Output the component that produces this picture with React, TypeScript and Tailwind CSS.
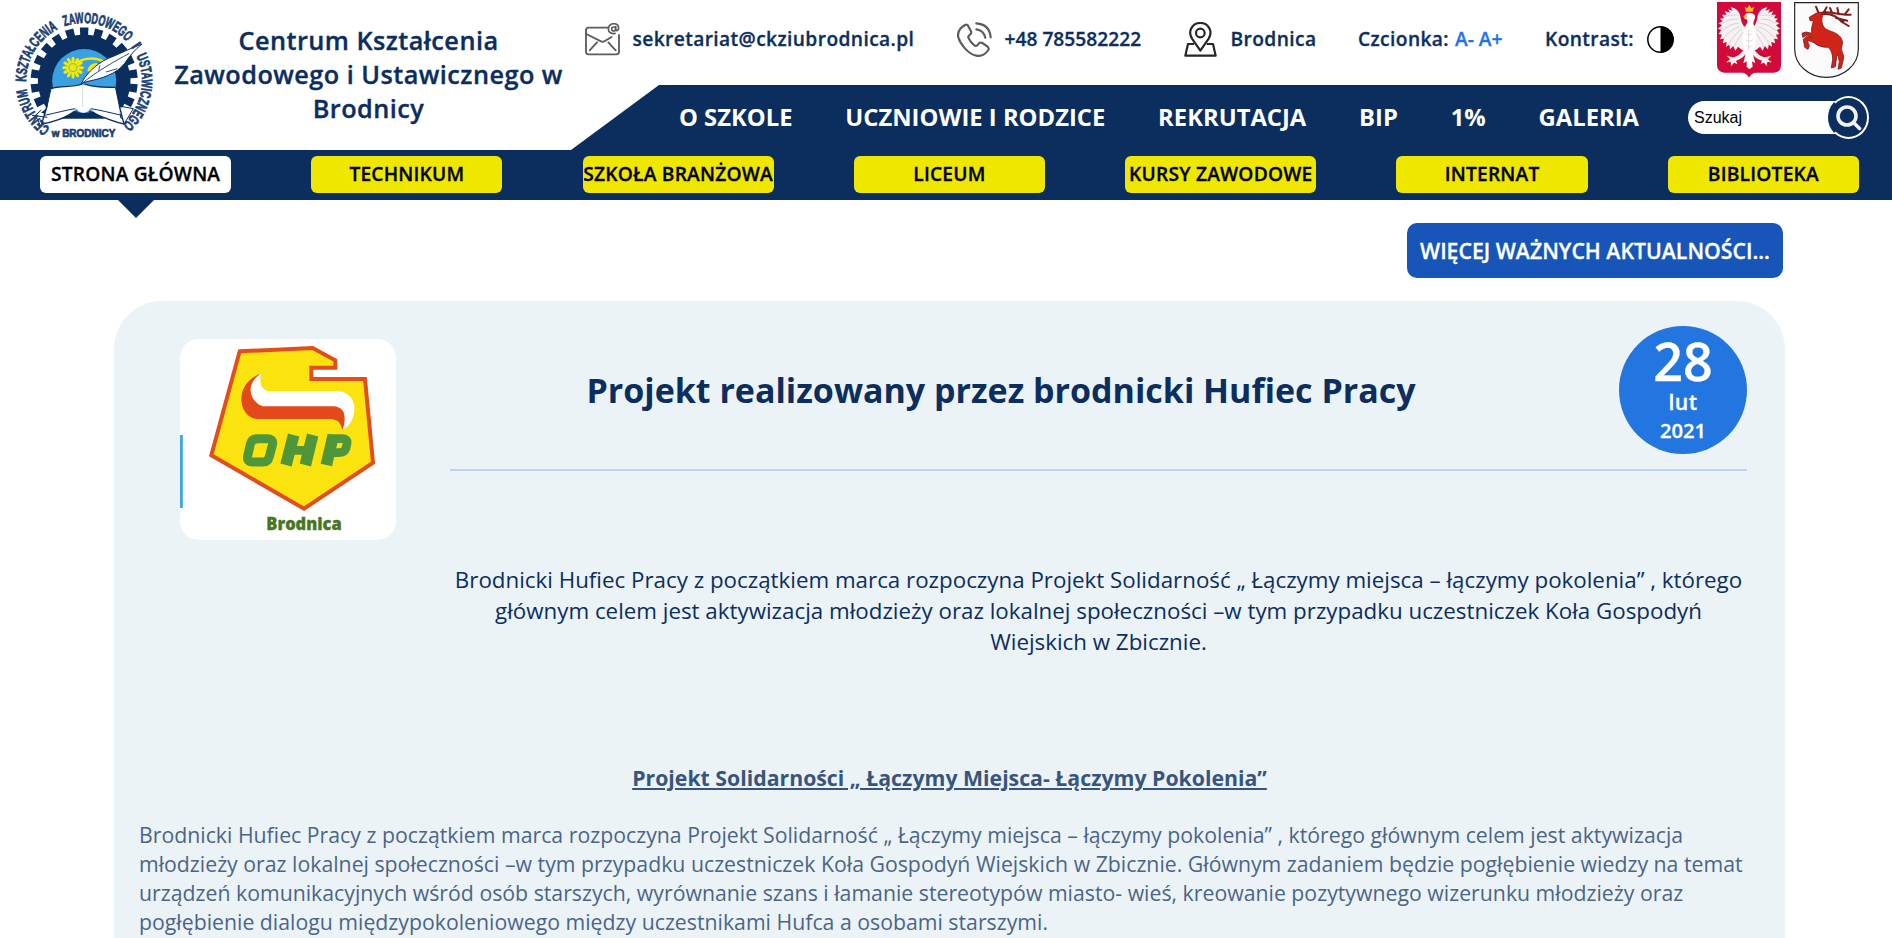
import type { ReactNode } from 'react';

const NAVY = '#0b2e5e';

function gearPoints(cx: number, cy: number, outer: number, root: number, teeth: number) {
  const pts: string[] = [];
  const step = (Math.PI * 2) / teeth;
  const at = (r: number, a: number) =>
    pts.push((cx + r * Math.sin(a)).toFixed(1) + ',' + (cy - r * Math.cos(a)).toFixed(1));
  for (let i = 0; i < teeth; i++) {
    const a = i * step;
    at(root, a - step * 0.3);
    at(outer, a - step * 0.28);
    at(outer, a + step * 0.28);
    at(root, a + step * 0.3);
  }
  return pts.join(' ');
}

const ringWords = [
  { text: 'CENTRUM', offset: 108, length: 142 },
  { text: 'KSZTAŁCENIA', offset: 271, length: 194 },
  { text: 'ZAWODOWEGO', offset: 487, length: 204 },
  { text: 'I', offset: 710, length: 10 },
  { text: 'USTAWICZNEGO', offset: 741, length: 226 },
];

function SchoolLogo() {
  return (
    <svg viewBox="42 33 420 381" className="h-[127px] w-[140px] overflow-visible">
      <defs>
        <path id="ring" d="M252,417 A174,174 0 0 1 252,69 A174,174 0 0 1 252,417" />
        <clipPath id="gearClip">
          <rect x="60" y="60" width="390" height="296" />
        </clipPath>
      </defs>
      <g clipPath="url(#gearClip)">
        <polygon points={gearPoints(252.5, 243, 161, 139, 22)} fill={NAVY} />
        <circle cx="252.5" cy="243" r="96" fill="#3ba0e2" />
      </g>
      <g fill="none" stroke="#f4ea00" strokeLinecap="round">
        {[0, 30, 60, 90, 120, 150].map((d) => (
          <path key={d} d="M191,203 H247" strokeWidth="9" transform={'rotate(' + d + ' 219 203)'} />
        ))}
        <path d="M234,187 C252,172 290,172 312,186" strokeWidth="7" />
      </g>
      <circle cx="219" cy="203" r="12" fill="#f4ea00" stroke="#3ba0e2" strokeWidth="2" />
      <path d="M262,214 C264,196 276,190 291,189 C292,204 283,216 262,214Z" fill="#f4ea00" />
      <path
        d="M152,268 C180,256 215,262 248,254 C280,258 310,262 346,262 L358,318 L362,374 C330,366 300,350 270,326 C262,342 238,342 230,326 C200,348 170,366 124,374 L142,322Z"
        fill="#fff"
      />
      <path d="M104,330 L150,348 L122,378Z" fill="#fff" />
      <path d="M400,330 L354,320 L372,374Z" fill="#fff" />
      <g fill="none" stroke={NAVY} strokeWidth="4">
        <path d="M152,266 C180,256 215,264 246,252 M254,252 C280,262 310,262 347,262" />
        <path d="M141,318 L125,372 C165,366 205,348 232,334 M358,318 L372,372 C335,364 300,348 268,334" />
        <path d="M134,346 C170,338 200,330 226,326 M365,346 C330,338 300,330 272,326" strokeWidth="3" />
        <path d="M153,266 L141,318 M347,264 L358,318" strokeWidth="3" />
        <path d="M248,254 V322" strokeWidth="2" stroke="#c3cddb" />
        <path d="M96,346 L142,352 M122,378 L106,346 L124,330 M358,318 L400,326 L376,366" strokeWidth="3" />
      </g>
      <path
        d="M244,250 C262,216 296,184 342,168 C370,156 398,142 426,132 C404,150 390,166 374,190 C350,222 304,236 264,244Z"
        fill="#fff"
        stroke={NAVY}
        strokeWidth="3"
      />
      <path d="M244,252 C290,214 340,186 388,160 M318,216 L352,206 M296,212 L300,196" fill="none" stroke={NAVY} strokeWidth="2.5" />
      <g fill="#1c3f73" stroke="#1c3f73" strokeWidth="2.2" fontFamily="Liberation Sans, Arial, sans-serif" fontWeight="700">
        {ringWords.map((w) => (
          <text key={w.text} fontSize="45">
            <textPath href="#ring" startOffset={w.offset} textLength={w.length} lengthAdjust="spacingAndGlyphs">
              {w.text}
            </textPath>
          </text>
        ))}
        <text x="155" y="410" fontSize="33" textLength="191" lengthAdjust="spacingAndGlyphs">
          w BRODNICY
        </text>
      </g>
    </svg>
  );
}

function MailIcon() {
  return (
    <svg viewBox="0 0 105 99" className="h-[33px] w-[35px]" fill="none" stroke="#5c5c5c" strokeWidth="5.5" strokeLinecap="round" strokeLinejoin="round">
      <path d="M68,14 H10 Q3,14 3,22 V86 Q3,94 11,94 H94 Q102,94 102,86 V36" />
      <path d="M4,33 L48,55 Q53,58 58,55 L80,42 M14,82 L36,58 M92,82 L70,58" />
      <g strokeWidth="5">
        <circle cx="86" cy="18" r="6" />
        <path d="M92,11 V20 Q94,26 100,20 C103,8 96,2 86,2 C76,2 70,10 70,18 C70,28 80,34 90,31" />
      </g>
    </svg>
  );
}

function PhoneIcon() {
  return (
    <svg viewBox="0 0 105 105" className="h-[35px] w-[35px]" fill="none" stroke="#5c5c5c" strokeWidth="6.5" strokeLinejoin="round" strokeLinecap="round">
      <path d="M24,9 C8,18 0,28 4,46 C10,68 34,96 58,101 C74,104 86,96 94,84 Q97,79 92,74 L76,63 Q70,60 66,64 L61,70 Q57,73 52,70 C44,64 38,56 34,47 Q33,43 37,40 L41,36 Q44,32 42,28 L33,11 Q30,6 24,9Z" />
      <path d="M58,4 C84,6 99,22 101,46 M58,22 C72,24 82,33 85,47" />
    </svg>
  );
}

function PinIcon() {
  return (
    <svg viewBox="0 0 99 105" className="mr-px h-[35px] w-[33px]" fill="none" stroke="#262626" strokeWidth="6.5" strokeLinejoin="round">
      <path d="M49,86 L24,50 C10,26 26,3 49,3 C72,3 88,26 74,50Z" />
      <circle cx="49" cy="33" r="13" />
      <path d="M30,66 H12 L4,101 H95 L87,66 H68" />
    </svg>
  );
}

function PolishCrest() {
  const wing = (
    <g>
      <path
        d="M140,82 C130,82 124,66 122,54 C120,36 108,24 92,22 L98,32 L84,28 L90,38 L74,34 L80,44 L66,44 L72,54 L60,56 L68,64 L56,70 L66,76 L54,86 L64,90 L56,102 L66,104 L60,118 L72,116 L68,130 L80,126 L78,140 L88,134 L90,148 L100,138 L106,152 L114,140 L126,150 L146,150 V84Z"
        fill="#f6f1f3"
      />
      <g fill="none" stroke="#cbbcc4" strokeWidth="2">
        <path d="M112,46 C94,44 86,46 76,50 M112,58 C94,56 78,62 68,70 M116,70 C98,70 80,80 66,92 M120,80 C102,84 86,98 70,114 M126,86 C112,96 98,112 84,134 M130,96 C120,108 110,122 102,142" />
      </g>
      <path
        d="M132,146 C126,158 114,170 98,172 L82,168 L90,178 L80,186 L92,186 L94,198 L102,188 L112,192 L108,182 C124,178 134,168 142,154Z"
        fill="#f6f1f3"
      />
      <path d="M82,168 L88,172 M80,186 L86,185 M94,198 L95,192" stroke="#e0b040" strokeWidth="4" />
    </g>
  );
  return (
    <svg viewBox="51 6 192 228" className="h-[76px] w-[64px]">
      <path d="M51,6 H243 V196 Q243,216 222,218 H166 Q154,220 147,233 Q140,220 128,218 H72 Q51,216 51,196Z" fill="#d20a3c" />
      {wing}
      <g transform="translate(294 0) scale(-1 1)">{wing}</g>
      <path
        d="M134,48 C136,36 158,34 164,46 C168,56 160,62 160,72 C172,96 170,130 158,160 L166,190 L156,184 L158,200 L148,208 L140,200 L140,184 L130,190 L137,160 C124,132 126,96 138,74 C146,66 144,58 134,56Z"
        fill="#fff"
      />
      <path d="M146,88 V150 M138,100 C142,106 152,106 156,100 M136,118 C142,126 152,126 158,118 M138,136 C142,142 152,142 156,136" fill="none" stroke="#d3c6cd" strokeWidth="2" />
      <path d="M134,20 L141,25 L148,15 L155,25 L162,20 L158,35 H138Z" fill="#f2bd25" />
      <path d="M140,44 L130,48 L134,56 L142,52Z" fill="#f2bd25" />
    </svg>
  );
}

function DeerCrest() {
  return (
    <svg viewBox="282 6 195 228" className="h-[76px] w-[65px]">
      <path d="M284,8 H475 V146 C475,196 430,232 379,232 C328,232 284,196 284,146Z" fill="#fbfbfb" stroke="#222" strokeWidth="3.5" />
      <g fill="none" stroke="#7d1c1a" strokeWidth="6" strokeLinecap="round" strokeLinejoin="round">
        <path d="M362,44 C390,38 410,48 426,66 L446,78 M408,54 L442,62 M426,66 L432,62" />
        <path d="M362,40 C380,28 404,46 452,44 M396,38 L390,24 M416,42 L412,24 M434,44 L446,28 M356,40 L348,20 M372,36 L380,22" />
      </g>
      <path
        d="M328,52 L348,40 L362,36 L368,46 C364,60 364,74 376,86 C392,96 410,96 422,112 L428,126 L424,146 C426,158 434,168 430,178 L424,204 L414,208 L418,186 L414,164 L410,170 L406,200 L394,204 L398,178 C398,160 392,148 384,142 C368,142 352,138 342,128 L332,124 L322,122 L328,138 L324,148 L314,142 L310,118 L318,110 L334,112 L320,106 L308,112 L306,100 L318,96 L336,100 C332,86 338,74 340,62 L330,62Z"
        fill="#d02419"
        stroke="#7d1c1a"
        strokeWidth="2.5"
        strokeLinejoin="round"
      />
    </svg>
  );
}

function OhpLogo() {
  return (
    <svg viewBox="240 147 648 603" className="h-[201px] w-[216px] rounded-[19px]">
      <rect x="240" y="147" width="648" height="603" fill="#fff" />
      <rect x="240" y="435" width="8.5" height="219" fill="#3fa9dd" />
      <path d="M419,184 L638,174 L706,211 V233 H634 V267 H795 L819,518 L612,656 L334,496Z" fill="#fbe30f" stroke="#e14d1b" strokeWidth="12" />
      <path d="M484,250 C440,266 422,300 424,334 C428,366 446,384 470,387 H690 C716,388 722,400 727,420 C736,400 738,386 732,366 C728,350 716,346 700,346 H488 C464,340 452,320 452,298 C454,278 466,264 484,250Z" fill="#e4491b" />
      <path d="M484,250 C462,266 452,280 452,300 C452,322 468,342 488,349 H700 C722,350 734,362 734,384 C734,398 732,408 728,420 C750,408 764,384 763,350 C760,322 740,304 712,304 H508 C484,300 476,280 484,250Z" fill="#fff" />
      <g fill="none" stroke="#4f963a">
        <path d="M474,446 H500 Q521,446 518,462 L508,500 Q504,516 490,516 H459 Q439,516 443,498 L451,462 Q455,446 474,446Z" strokeWidth="27" />
        <path d="M581,435 L558,525 M638,435 L616,525" strokeWidth="35" />
        <path d="M572,481 H628" strokeWidth="26" />
        <path d="M700,435 L679,525" strokeWidth="35" />
        <path d="M690,446 H726 Q744,446 741,460 L738,474 Q734,488 716,488 H684" strokeWidth="26" />
      </g>
      <text x="499" y="721" fontFamily="Open Sans, sans-serif" fontWeight="800" fontSize="54" fill="#47761f" stroke="#47761f" strokeWidth="1" textLength="226" lengthAdjust="spacingAndGlyphs">
        Brodnica
      </text>
    </svg>
  );
}

const mainNav = ['O SZKOLE', 'UCZNIOWIE I RODZICE', 'REKRUTACJA', 'BIP', '1%', 'GALERIA'];
const sections = ['STRONA GŁÓWNA', 'TECHNIKUM', 'SZKOŁA BRANŻOWA', 'LICEUM', 'KURSY ZAWODOWE', 'INTERNAT', 'BIBLIOTEKA'];

function Contact({ icon, children }: { icon: ReactNode; children: ReactNode }) {
  return (
    <a className="flex h-[79px] items-center gap-[12.5px]">
      {icon}
      {children}
    </a>
  );
}

function Header() {
  return (
    <header>
      <div className="flex h-[150px]">
        <div className="flex w-[571px] items-center">
          <div className="ml-[14px] w-[140px] pb-px">
            <SchoolLogo />
          </div>
          <h1 className="ml-[14px] w-[401px] pb-[2px] text-center text-[25.28px] leading-[34px] font-semibold tracking-[0.46px] text-[#0b2e5e] [-webkit-text-stroke:0.35px]">
            Centrum Kształcenia Zawodowego i Ustawicznego w Brodnicy
          </h1>
        </div>
        <div className="flex flex-1 flex-col">
          <div className="grid h-[85px] grid-cols-[372px_227px_174px_187px_172px_77px_65px] pl-[14px] text-[19.2px] font-semibold whitespace-nowrap text-[#0b2e5e] [-webkit-text-stroke:0.3px]">
            <Contact icon={<MailIcon />}><span className="tracking-[0.39px]">sekretariat@ckziubrodnica.pl</span></Contact>
            <Contact icon={<PhoneIcon />}><span>+48 785582222</span></Contact>
            <Contact icon={<PinIcon />}><span className="tracking-[0.39px]">Brodnica</span></Contact>
            <div className="flex h-[79px] items-center gap-[6px]">
              <span className="tracking-[0.39px]">Czcionka:</span> <span className="text-[#2173e8]">A- A+</span>
            </div>
            <div className="flex h-[79px] items-center gap-[13px]">
              <span className="tracking-[0.39px]">Kontrast:</span>
              <svg viewBox="0 0 27 27" className="size-[27px]">
                <circle cx="13.5" cy="13.5" r="12.7" fill="#fff" stroke="#000" strokeWidth="1.5" />
                <path d="M13.500,0.500 A13,13 0 0 1 13.500,26.500Z" fill="#000" />
              </svg>
            </div>
            <div className="pt-0.5"><PolishCrest /></div>
            <div className="pt-0.5"><DeerCrest /></div>
          </div>
          <nav className="flex h-[65px] items-center bg-[#0b2e5e] pl-[108px] text-[23.8px] font-bold whitespace-nowrap text-white [clip-path:polygon(88px_0,100%_0,100%_100%,0_100%)]">
            <div className="flex w-[1009px] gap-[52.8px]">
              {mainNav.map((n) => (
                <a key={n}>{n}</a>
              ))}
            </div>
            <div className="flex items-center">
              <div className="-mr-[10px] flex h-[33px] w-[151px] items-center rounded-l-full bg-white pl-[6px] font-['Liberation_Sans',Arial,sans-serif] text-base font-normal text-black">
                Szukaj
              </div>
              <div className="-ml-px flex h-[43px] w-[41px] items-center justify-center rounded-[50%] border-2 border-white border-l-[#0b2e5e] bg-[#0b2e5e]">
                <svg viewBox="0 0 26 26" className="size-[26px]" fill="none" stroke="#f0f2f6" strokeWidth="3.6" strokeLinecap="round">
                  <circle cx="11" cy="11" r="9" />
                  <path d="M17.500,17.500 L23.500,23.500" />
                </svg>
              </div>
            </div>
          </nav>
        </div>
      </div>
      <div className="flex h-[50px] items-start justify-between bg-[#0b2e5e] pt-[6px] pr-[33px] pl-[40px] text-[19.2px] font-semibold tracking-[0.2px] whitespace-nowrap text-black [-webkit-text-stroke:0.3px]">
        {sections.map((s, i) => (
          <a
            key={s}
            className={
              i === 0
                ? 'flex h-[37px] w-[191.2px] items-center justify-center rounded-[6px] bg-white'
                : 'flex h-[37px] w-[191.2px] items-center justify-center rounded-[6px] bg-[#efe700]'
            }
          >
            {s}
          </a>
        ))}
      </div>
      <div className="ml-[118px] h-[18px] w-[36px] bg-[#0b2e5e] [clip-path:polygon(0_0,100%_0,50%_100%)]" />
    </header>
  );
}

export default function App() {
  return (
    <div className="h-[938px] overflow-hidden bg-white font-['Open_Sans',sans-serif]">
      <Header />
      <div className="mt-[5px] flex justify-end pr-[109px]">
        <a className="flex h-[55px] w-[376px] items-center justify-center rounded-[10px] bg-[#1755b8] text-[21.28px] font-semibold whitespace-nowrap text-white [-webkit-text-stroke:0.3px]">
          WIĘCEJ WAŻNYCH AKTUALNOŚCI...
        </a>
      </div>
      <article className="mt-[23px] ml-[114px] h-[700px] w-[1671px] rounded-t-[48px] bg-[#ebf3f6] px-[25px] text-[#0b2e5e]">
        <div className="flex pt-[25px]">
          <div className="mt-[13px] ml-[41px] w-[216px]">
            <OhpLogo />
          </div>
          <div className="ml-[54px] w-[1297px]">
            <div className="flex items-center border-b-2 border-[#b4d5f8] pb-[15px]">
              <h2 className="w-[1102px] flex-none text-center text-[34px] font-bold">
                Projekt realizowany przez brodnicki Hufiec Pracy
              </h2>
              <div className="ml-[67px] flex size-32 flex-none flex-col items-center rounded-full bg-[#2375e0] font-semibold text-white [-webkit-text-stroke:0.3px]">
                <span className="mt-[9px] text-[52px] leading-[52px]">28</span>
                <span className="text-[21.28px] leading-[29px] tracking-[0.4px]">lut</span>
                <span className="text-[20.2px] leading-[29px]">2021</span>
              </div>
            </div>
            <p className="mt-[93px] text-center text-[22.34px] leading-[31px]">
              Brodnicki Hufiec Pracy z początkiem marca rozpoczyna Projekt Solidarność „ Łączymy miejsca – łączymy pokolenia” , którego głównym celem jest aktywizacja młodzieży oraz lokalnej społeczności –w tym przypadku uczestniczek Koła Gospodyń Wiejskich w Zbicznie.
            </p>
          </div>
        </div>
        <div className="mt-[106px] text-[21.28px] leading-[29px] opacity-80">
          <p className="text-center font-bold underline">Projekt Solidarności „ Łączymy Miejsca- Łączymy Pokolenia”</p>
          <p className="mt-[28px] opacity-90">
            Brodnicki Hufiec Pracy z początkiem marca rozpoczyna Projekt Solidarność „ Łączymy miejsca – łączymy pokolenia” , którego głównym celem jest aktywizacja młodzieży oraz lokalnej społeczności –w tym przypadku uczestniczek Koła Gospodyń Wiejskich w Zbicznie. Głównym zadaniem będzie pogłębienie wiedzy na temat urządzeń komunikacyjnych wśród osób starszych, wyrównanie szans i łamanie stereotypów miasto- wieś, kreowanie pozytywnego wizerunku młodzieży oraz pogłębienie dialogu międzypokoleniowego między uczestnikami Hufca a osobami starszymi.
          </p>
        </div>
      </article>
    </div>
  );
}
